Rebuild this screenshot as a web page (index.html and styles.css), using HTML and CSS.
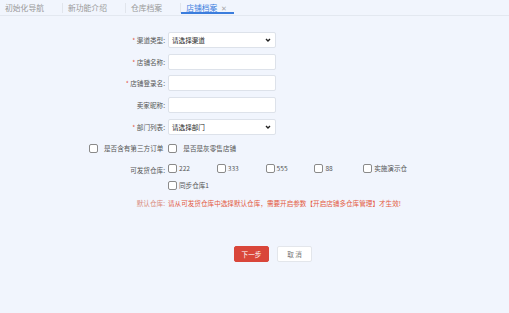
FILE: index.html
```html
<!DOCTYPE html>
<html lang="zh-CN">
<head>
    <meta charset="UTF-8">
    <meta name="viewport" content="width=device-width, initial-scale=1.0">
    <title>店铺档案</title>
    <link rel="stylesheet" href="styles.css">
</head>
<body>
    <div class="tabs">
        <div class="tab">初始化导航</div>
        <div class="tab">新功能介绍</div>
        <div class="tab">仓库档案</div>
        <div class="tab active">店铺档案 <span class="close">✕</span></div>
    </div>

    <div class="form">
        <div class="row">
            <label class="label"><span class="req">*</span> 渠道类型:</label>
            <div class="select">
                <span>请选择渠道</span>
                <svg width="6" height="4" viewBox="0 0 6 4"><path d="M1 1l2 2 2-2" fill="none" stroke="#222" stroke-width="1.4"/></svg>
            </div>
        </div>
        <div class="row">
            <label class="label"><span class="req">*</span> 店铺名称:</label>
            <div class="input"></div>
        </div>
        <div class="row">
            <label class="label"><span class="req">*</span> 店铺登录名:</label>
            <div class="input"></div>
        </div>
        <div class="row">
            <label class="label">卖家昵称:</label>
            <div class="input"></div>
        </div>
        <div class="row">
            <label class="label"><span class="req">*</span> 部门列表:</label>
            <div class="select">
                <span>请选择部门</span>
                <svg width="6" height="4" viewBox="0 0 6 4"><path d="M1 1l2 2 2-2" fill="none" stroke="#222" stroke-width="1.4"/></svg>
            </div>
        </div>

        <div class="checks">
            <span class="check"><i class="box"></i>是否含有第三方订单</span>
            <span class="check"><i class="box"></i>是否是灰零售店铺</span>
        </div>

        <div class="row top">
            <label class="label">可发货仓库:</label>
            <div class="stores">
                <span class="check"><i class="box"></i>222</span>
                <span class="check"><i class="box"></i>333</span>
                <span class="check"><i class="box"></i>555</span>
                <span class="check"><i class="box"></i>88</span>
                <span class="check"><i class="box"></i>实施演示仓</span>
                <span class="check"><i class="box"></i>同步仓库1</span>
            </div>
        </div>

        <div class="row warn">
            <label class="label">默认仓库:</label>
            <div>请从可发货仓库中选择默认仓库，需要开启参数【开启店铺多仓库管理】才生效!</div>
        </div>

        <div class="actions">
            <button class="btn primary">下一步</button>
            <button class="btn">取 消</button>
        </div>
    </div>
</body>
</html>
```

FILE: styles.css
```css
body {
    margin: 0;
    background-color: #f1f5fd;
    font-family: "Noto Sans CJK SC", "Noto Sans", sans-serif;
    color: #555;
    height: 313px;
    overflow: hidden;
}

.tabs {
    display: flex;
    height: 15px;
    border-bottom: 1px solid #e3e8f0;
    font-size: 7.8px;
    color: #999;
}

.tab {
    display: flex;
    align-items: center;
    padding: 0 19px 0 5px;
    position: relative;
}

.tab::after {
    content: "";
    position: absolute;
    right: 0;
    top: 3px;
    height: 10px;
    border-right: 1px solid #e1e5ec;
}

.tab.active {
    color: #3b7ddd;
    padding: 0 7px 0 5px;
}

.tab.active::after {
    border: none;
    top: auto;
    bottom: 1px;
    left: 0;
    right: 0;
    height: 2px;
    background-color: #3b7ddd;
}

.close {
    color: #aaa;
    font-size: 7px;
    margin-left: 4px;
}

.form {
    padding-top: 16px;
    font-size: 6.6px;
}

.row {
    display: flex;
    align-items: center;
    margin-bottom: 5.7px;
}

.row.top {
    align-items: flex-start;
}

.label {
    width: 168px;
    padding-right: 3px;
    box-sizing: border-box;
    text-align: right;
    flex-shrink: 0;
}

.row.top .label {
    padding-top: 3px;
}

.req {
    color: #e2523f;
}

.input,
.select {
    width: 108px;
    height: 16px;
    box-sizing: border-box;
    background-color: #fff;
    border: 1px solid #dde2ea;
    border-radius: 2px;
}

.select {
    display: flex;
    align-items: center;
    justify-content: space-between;
    padding: 0 4px 0 3px;
    color: #222;
}

.checks {
    display: flex;
    padding-left: 89px;
    margin: 7px 0 7px;
}

.checks .check {
    margin-right: 5px;
}

.check {
    display: flex;
    align-items: center;
    height: 13px;
}

.box {
    width: 7px;
    height: 7px;
    border: 1px solid #8a8a8a;
    border-radius: 2px;
    background-color: #fff;
    margin-right: 2px;
}

.checks .box {
    margin-right: 6px;
}

.stores {
    display: grid;
    grid-template-columns: repeat(5, 48.8px);
    row-gap: 4px;
}

.row.warn {
    color: #e45a3e;
    margin-top: 6px;
}

.row.warn .label {
    color: #d98a7a;
}

.actions {
    display: flex;
    gap: 8px;
    padding-left: 234px;
    margin-top: 38px;
}

.btn {
    width: 35px;
    height: 16px;
    font-family: inherit;
    font-size: 6.6px;
    border: 1px solid #e3e6eb;
    border-radius: 2px;
    background-color: #fff;
    color: #777;
    padding: 0;
}

.btn.primary {
    background-color: #d9463a;
    border-color: #d9463a;
    color: #fff;
}
```
